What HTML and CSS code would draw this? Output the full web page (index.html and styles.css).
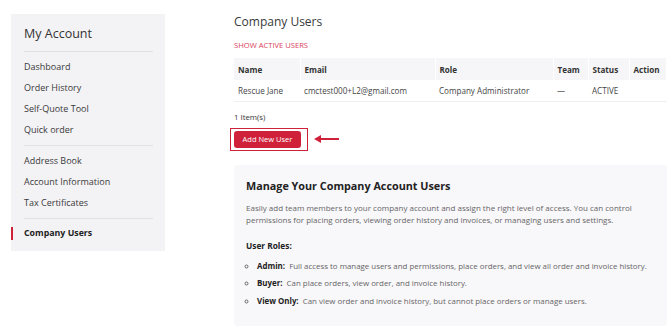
FILE: index.html
```html
<!DOCTYPE html>
<html lang="en">
<head>
    <meta charset="UTF-8">
    <meta name="viewport" content="width=device-width, initial-scale=1.0">
    <title>Company Users</title>
    <link rel="stylesheet" href="styles.css">
</head>
<body>
    <div class="page">
        <aside class="sidebar">
            <h2 class="sidebar-title">My Account</h2>
            <ul class="nav-group">
                <li><a href="#">Dashboard</a></li>
                <li><a href="#">Order History</a></li>
                <li><a href="#">Self-Quote Tool</a></li>
                <li><a href="#">Quick order</a></li>
            </ul>
            <ul class="nav-group">
                <li><a href="#">Address Book</a></li>
                <li><a href="#">Account Information</a></li>
                <li><a href="#">Tax Certificates</a></li>
            </ul>
            <ul class="nav-group">
                <li class="active"><a href="#">Company Users</a></li>
            </ul>
        </aside>

        <main class="main">
            <h1 class="page-title">Company Users</h1>
            <a href="#" class="show-active">SHOW ACTIVE USERS</a>

            <table class="users-table">
                <colgroup>
                    <col class="col-name">
                    <col class="col-email">
                    <col class="col-role">
                    <col class="col-team">
                    <col class="col-status">
                    <col>
                </colgroup>
                <thead>
                    <tr>
                        <th>Name</th>
                        <th>Email</th>
                        <th>Role</th>
                        <th>Team</th>
                        <th>Status</th>
                        <th>Action</th>
                    </tr>
                </thead>
                <tbody>
                    <tr>
                        <td>Rescue Jane</td>
                        <td>cmctest000+L2@gmail.com</td>
                        <td>Company Administrator</td>
                        <td>—</td>
                        <td>ACTIVE</td>
                        <td></td>
                    </tr>
                </tbody>
            </table>

            <div class="item-count">1 Item(s)</div>

            <div class="button-row">
                <div class="highlight">
                    <button class="button">Add New User</button>
                </div>
                <svg class="arrow" width="26" height="10" viewBox="0 0 26 10">
                    <path d="M1 5 L8 1 L8 9 Z" fill="#d0213b"/>
                    <rect x="7" y="4" width="19" height="2" fill="#d0213b"/>
                </svg>
            </div>

            <section class="info-box">
                <h3>Manage Your Company Account Users</h3>
                <p>Easily add team members to your company account and assign the right level of access. You can control permissions for placing orders, viewing order history and invoices, or managing users and settings.</p>
                <h4>User Roles:</h4>
                <ul class="roles">
                    <li><strong>Admin:</strong>&nbsp; Full access to manage users and permissions, place orders, and view all order and invoice history.</li>
                    <li><strong>Buyer:</strong>&nbsp; Can place orders, view order, and invoice history.</li>
                    <li><strong>View Only:</strong>&nbsp; Can view order and invoice history, but cannot place orders or manage users.</li>
                </ul>
            </section>
        </main>
    </div>
</body>
</html>
```

FILE: styles.css
```css
* {
    box-sizing: border-box;
}
body {
    font-family: 'Open Sans', sans-serif;
    margin: 0;
    padding: 0;
    background: #fff;
    color: #333;
}
a {
    color: inherit;
    text-decoration: none;
}
.page {
    display: flex;
    align-items: flex-start;
    gap: 69px;
    padding: 14px 3px 0 11px;
}
.sidebar {
    width: 154px;
    height: 237px;
    flex-shrink: 0;
    background-color: #f3f2f5;
    padding: 0 12px 0 13px;
}
.sidebar-title {
    font-size: 12.5px;
    font-weight: 500;
    color: #333;
    margin: 0;
    padding: 10px 0 7px;
    line-height: 20px;
    border-bottom: 1px solid #e1e0e4;
}
.nav-group {
    list-style: none;
    margin: 0;
    padding: 4px 0 5px;
    border-bottom: 1px solid #e1e0e4;
}
.nav-group:last-child {
    border-bottom: none;
}
.nav-group li {
    font-size: 9px;
    font-weight: 500;
    line-height: 21px;
    color: #3a3a3a;
    position: relative;
}
.nav-group li.active {
    font-size: 8.8px;
    font-weight: 700;
    color: #222;
}
.nav-group li.active::before {
    content: '';
    position: absolute;
    left: -13px;
    top: 4px;
    width: 2px;
    height: 13px;
    background-color: #d0213b;
}
.main {
    width: 433px;
}
.page-title {
    font-size: 12px;
    font-weight: 400;
    color: #3a3a3a;
    margin: 0;
    line-height: 16px;
}
.show-active {
    display: block;
    margin-top: 9px;
    font-size: 7.6px;
    font-weight: 500;
    line-height: 12px;
    color: #d9415e;
}
.users-table {
    width: 100%;
    margin-top: 7px;
    border-collapse: collapse;
    table-layout: fixed;
    font-size: 8.1px;
}
.col-name { width: 66px; }
.col-email { width: 135px; }
.col-role { width: 118px; }
.col-team { width: 35px; }
.col-status { width: 41px; }
.users-table th {
    background-color: #f6f6f8;
    text-align: left;
    font-weight: 700;
    color: #333;
    height: 22px;
    padding: 0 4px;
    border-right: 1px solid #fff;
}
.users-table td {
    height: 21px;
    padding: 0 4px;
    color: #444;
    border-bottom: 1px solid #efeff1;
}
.item-count {
    margin-top: 9px;
    font-size: 7.8px;
    line-height: 12px;
    color: #333;
}
.button-row {
    display: flex;
    align-items: center;
    gap: 5px;
    margin: 5px 0 0 -4px;
}
.highlight {
    border: 1px solid #d0213b;
    padding: 2px 6px 2px 3px;
}
.button {
    font-family: inherit;
    display: block;
    background-color: #d0213b;
    color: #fff;
    border: none;
    border-radius: 3px;
    font-size: 7.5px;
    font-weight: 500;
    height: 17px;
    width: 67px;
    padding: 0;
}
.info-box {
    margin-top: 14px;
    background-color: #f8f7fa;
    border-radius: 4px;
    padding: 14px 12px 15px;
    min-height: 161px;
}
.info-box h3 {
    margin: 0;
    font-size: 10.8px;
    line-height: 14px;
    color: #222;
}
.info-box p {
    margin: 9px 0 0;
    font-size: 8px;
    line-height: 12px;
    color: #666;
}
.info-box h4 {
    margin: 14px 0 0;
    font-size: 8.3px;
    line-height: 12px;
    color: #222;
}
.roles {
    margin: 6px 0 0;
    padding-left: 11px;
    list-style: circle;
}
.roles li {
    font-size: 7.9px;
    line-height: 17.5px;
    color: #666;
}
.roles strong {
    color: #222;
}
```
